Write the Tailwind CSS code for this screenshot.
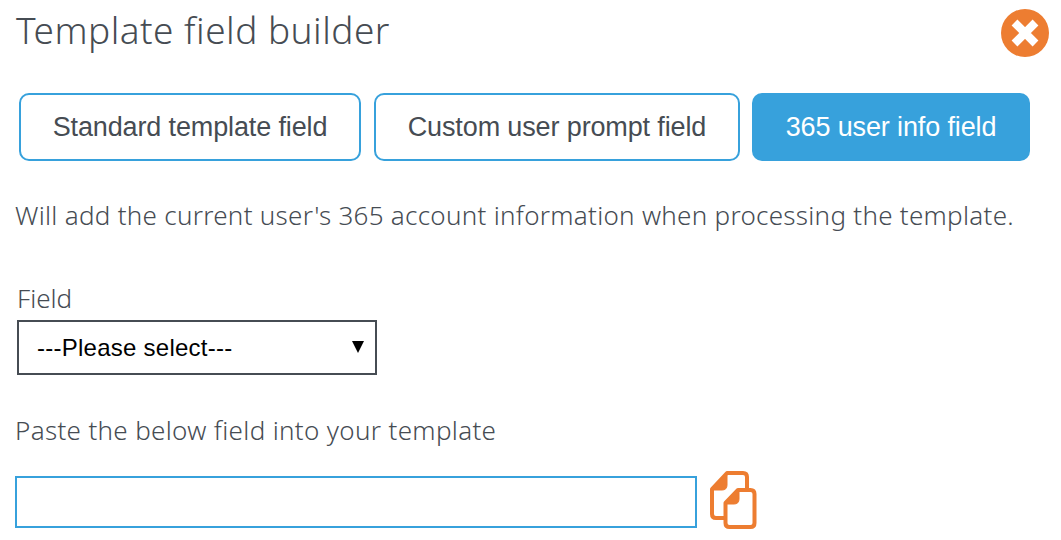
<!DOCTYPE html>
<html lang="en">
<head>
<meta charset="utf-8">
<title>Template field builder</title>
<script src="https://cdn.jsdelivr.net/npm/@tailwindcss/browser@4"></script>
</head>
<body class="h-[540px] overflow-hidden bg-white font-['Noto_Sans',sans-serif] font-light text-[#464c53]">
<main class="flex flex-col pl-[15px] pr-3">
  <header class="flex h-[66px] items-start justify-between">
    <h1 class="mt-[5px] whitespace-nowrap pl-px text-[37px] leading-[50px] tracking-[0.48px]">Template field builder</h1>
    <button aria-label="Close" class="mt-[9px]">
      <svg class="block size-12" viewBox="0 0 48 48"><circle cx="24" cy="24" r="24" fill="#ed7d31"/><path d="M13.5 13.5 34.5 34.5M34.5 13.5 13.5 34.5" stroke="#fff" stroke-width="8.2"/></svg>
    </button>
  </header>
  <nav class="mt-[27px] flex pl-1 font-['Liberation_Sans',Arial,sans-serif] text-[27px] font-normal tracking-[-0.13px]">
    <button class="h-[68px] w-[342px] whitespace-nowrap rounded-[10px] border-2 border-[#37a1dc]">Standard template field</button>
    <button class="ml-[13px] h-[68px] w-[366px] whitespace-nowrap rounded-[10px] border-2 border-[#37a1dc]">Custom user prompt field</button>
    <button class="ml-3 h-[68px] w-[278px] whitespace-nowrap rounded-[10px] bg-[#37a1dc] text-white">365 user info field</button>
  </nav>
  <p class="mt-9 h-9 whitespace-nowrap text-[26px] leading-9 tracking-[0.28px]">Will add the current user's 365 account information when processing the template.</p>
  <label class="mt-[47px] h-9 pl-0.5 text-[26px] leading-9">Field</label>
  <div class="ml-0.5 mt-1 flex h-[55px] w-[360px] items-center justify-between border-2 border-[#464c53] pl-[18px] pr-[11px] font-['Liberation_Sans',Arial,sans-serif] text-[24px] font-normal tracking-[0.25px] text-black">
    <span>---Please select---</span>
    <svg class="mb-0.5 h-3 w-3" viewBox="0 0 12 12"><path d="M0 0H12L6 12Z"/></svg>
  </div>
  <p class="mt-[37px] h-9 whitespace-nowrap text-[26px] leading-9 tracking-[0.33px]">Paste the below field into your template</p>
  <div class="mt-[22px] flex items-start">
    <input aria-label="Template field" class="mt-1.5 h-[52px] w-[682px] border-2 border-[#37a1dc]">
    <button aria-label="Copy" class="ml-3">
      <svg class="block h-[60px] w-12" viewBox="0 0 48 60" fill="none" stroke="#ed7d31" stroke-width="4" stroke-linejoin="round"><path d="M16 48H7Q3 48 3 44V19L18 3H34Q38 3 38 7V20"/><path d="M3 19 18 3V15Q18 20 13 20H3Z" fill="#ed7d31" stroke-width="1"/><path d="M16.5 33 29 20H41.5Q45.5 20 45.5 24V53Q45.5 57 41.5 57H20.5Q16.5 57 16.5 53Z" fill="#fff"/><path d="M17 33 30 20V29Q30 34 25 34H17Z" fill="#ed7d31" stroke-width="1"/></svg>
    </button>
  </div>
</main>
</body>
</html>
